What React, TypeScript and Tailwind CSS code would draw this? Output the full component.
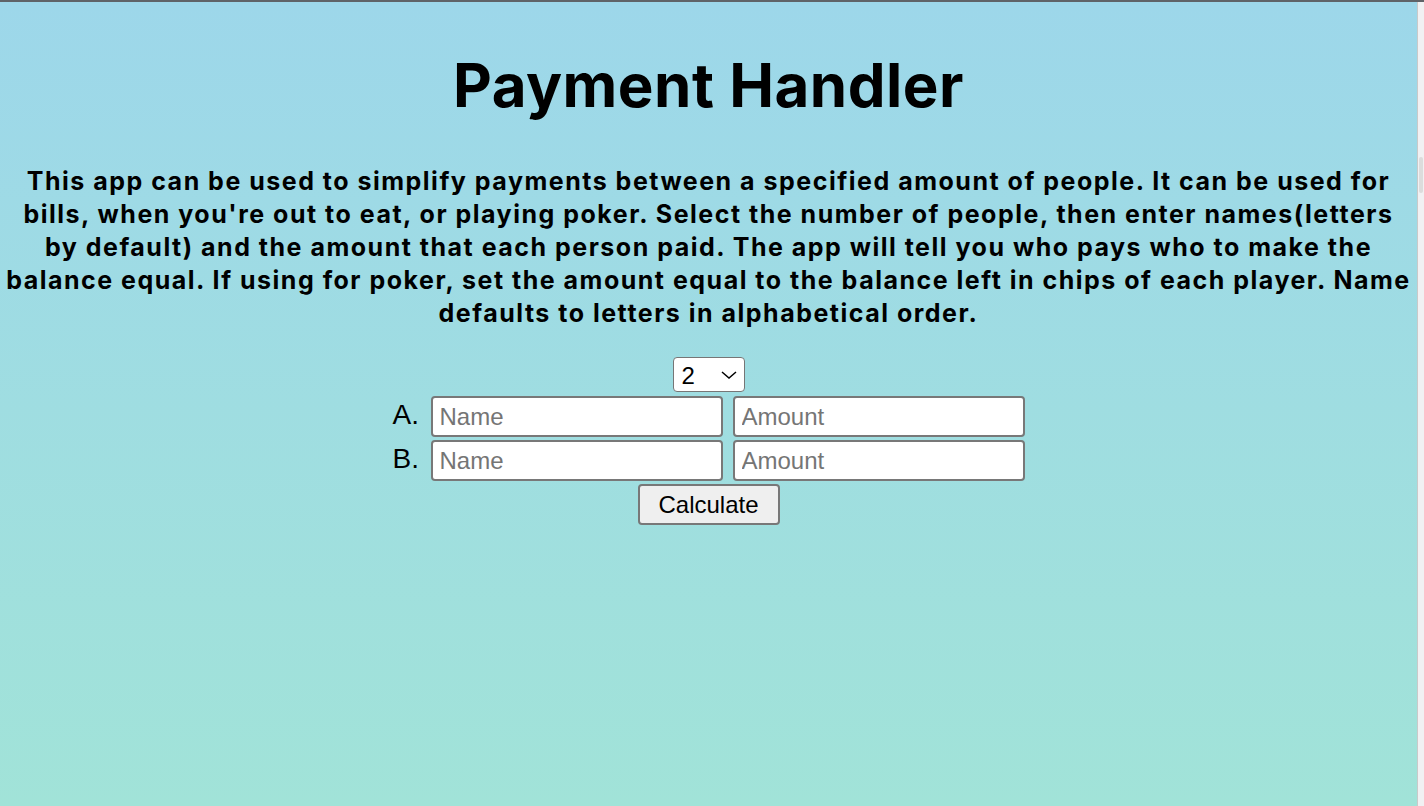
import { useState } from "react";

export default function App() {
  const [count, setCount] = useState(2);
  const letters = "ABCDEFGHIJ".split("").slice(0, count);

  return (
    <div className="h-screen w-full flex flex-col overflow-hidden">
      <div className="h-[2px] bg-[#5f6368] shrink-0" />
      <div className="flex flex-1 min-h-0">
        <main className="flex-1 bg-gradient-to-b from-[#9dd7ea] to-[#a1e3d8] text-center text-black">
          <h1 className="mt-[47px] text-[60px] leading-[72px] font-bold tracking-[0.5px] font-['Inter',sans-serif]">
            Payment Handler
          </h1>
          <p className="mt-[44px] whitespace-nowrap text-[25px] leading-[33px] font-bold tracking-[1.5px] font-['Inter',sans-serif]">
            This app can be used to simplify payments between a specified amount of people. It can be used for
            <br />
            bills, when you're out to eat, or playing poker. Select the number of people, then enter names(letters
            <br />
            by default) and the amount that each person paid. The app will tell you who pays who to make the
            <br />
            balance equal. If using for poker, set the amount equal to the balance left in chips of each player. Name
            <br />
            defaults to letters in alphabetical order.
          </p>

          <div className="mt-[27px] flex flex-col items-center gap-[3px] font-['Liberation_Sans',Arial,sans-serif]">
            <div className="relative">
              <select
                value={count}
                onChange={(e) => setCount(Number(e.target.value))}
                className="appearance-none w-[72px] h-[35px] pl-[8px] bg-white border border-[#767676] rounded-[4px] text-[24px] text-black outline-none"
              >
                {[2, 3, 4, 5, 6, 7, 8, 9, 10].map((n) => (
                  <option key={n} value={n}>{n}</option>
                ))}
              </select>
              <svg className="absolute left-[48px] top-[14px] pointer-events-none" width="16" height="8" viewBox="0 0 16 8" fill="none">
                <path d="M1 1l7 6 7-6" stroke="#000" strokeWidth="1.5" />
              </svg>
            </div>

            <div className="flex flex-col gap-[3px] mt-[1px]">
              {letters.map((l) => (
                <div key={l} className="flex items-center">
                  <span className="w-[38px] text-left text-[28px] leading-[28px] -mt-[4px]">{l}.</span>
                  <input
                    placeholder="Name"
                    className="w-[292px] h-[41px] px-[7px] bg-white border-2 border-[#787878] rounded-[4px] text-[24px] placeholder:text-[#757575] outline-none"
                  />
                  <input
                    placeholder="Amount"
                    className="ml-[10px] w-[292px] h-[41px] px-[7px] bg-white border-2 border-[#787878] rounded-[4px] text-[24px] placeholder:text-[#757575] outline-none"
                  />
                </div>
              ))}
            </div>

            <button className="w-[142px] h-[41px] bg-[#efefef] border-2 border-[#787878] rounded-[4px] text-[24px] text-black">
              Calculate
            </button>
          </div>
        </main>

        <div className="w-[7px] shrink-0 flex border-l border-[#c9c9c9] bg-[#f1f1f3]">
          <div className="mt-[155px] ml-[1px] w-[4px] h-[36px] bg-[#dcdcdc] rounded-sm" />
        </div>
      </div>
    </div>
  );
}
